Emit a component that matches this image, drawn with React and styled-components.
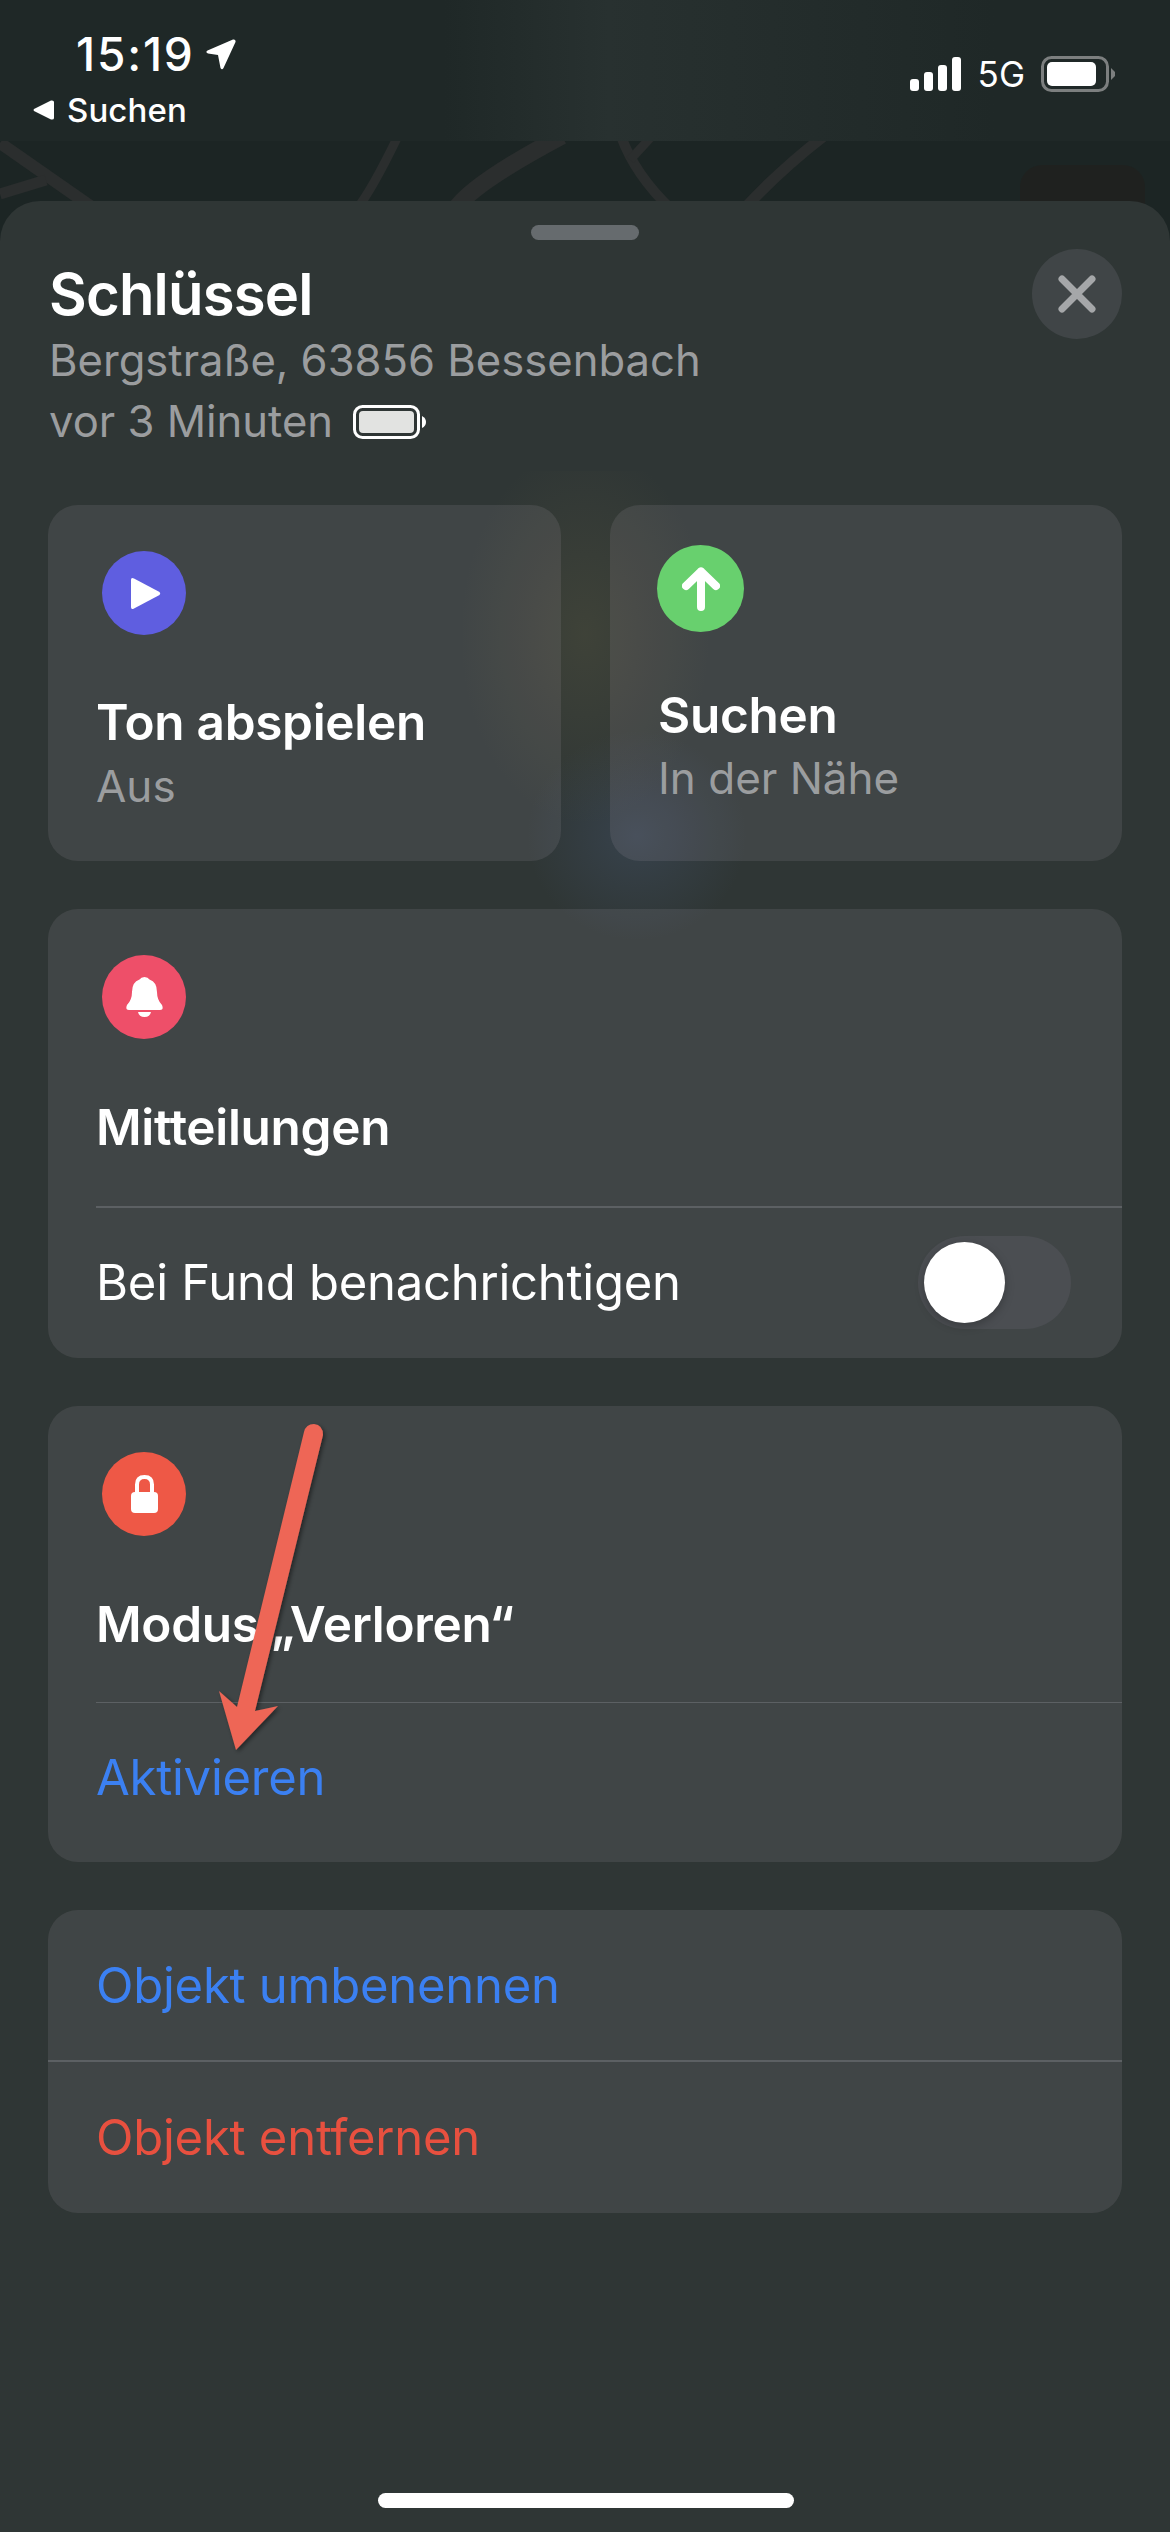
import React from 'react';
import styled, { createGlobalStyle } from 'styled-components';

const Global = createGlobalStyle`
  html, body { margin: 0; padding: 0; background: #1c2524; }
  body { font-family: Inter, "Noto Sans", "Liberation Sans", sans-serif; }
`;

const Screen = styled.div`
  position: relative;
  width: 1170px;
  height: 2532px;
  overflow: hidden;
  background: #1c2524;
  color: #fff;
`;
const MapLayer = styled.svg`
  position: absolute;
  left: 0; top: 0;
`;
const StatusBar = styled.div`
  position: relative;
  height: 141px;
  box-sizing: border-box;
  background: linear-gradient(90deg, #1f2827 0%, #1f2827 38%, #283130 52%, #242d2c 66%, #1f2827 85%, #1f2827 100%);
  display: flex;
  justify-content: space-between;
  padding: 28px 55px 0 33px;
`;
const StatusLeft = styled.div`display: flex; flex-direction: column;`;
const TimeRow = styled.div`
  display: flex; align-items: center; gap: 11px;
  padding-left: 43px;
  font-size: 46px; font-weight: 500; line-height: 52px;
  letter-spacing: 1.8px;
`;
const BackRow = styled.div`
  display: flex; align-items: center; gap: 13px;
  margin-top: 10px;
  font-size: 33px; font-weight: 500; line-height: 40px; letter-spacing: 0.1px;
`;
const StatusRight = styled.div`
  display: flex; align-items: center; gap: 16px; height: 36px; margin-top: 28px;
  font-size: 35px; font-weight: 400;
`;

const Sheet = styled.div`
  position: absolute;
  left: 0; right: 0; top: 201px; bottom: 0;
  background: #2f3635;
  border-radius: 40px 40px 0 0;
  box-sizing: border-box;
  padding: 0 48px;
  display: flex;
  flex-direction: column;
  overflow: hidden;
`;
const Glow = styled.div`
  position: absolute;
  left: 400px; top: 270px;
  width: 370px; height: 480px;
  background:
    radial-gradient(ellipse 125px 190px at 50% 34%, rgba(125,115,70,0.2), transparent 100%),
    radial-gradient(ellipse 110px 105px at 64% 76%, rgba(85,110,160,0.22), transparent 100%);
`;
const Grabber = styled.div`
  width: 108px; height: 15px; border-radius: 8px;
  background: #666b6e;
  align-self: center;
  margin-top: 24px;
  position: relative;
`;
const Header = styled.div`
  position: relative;
  display: flex;
  justify-content: space-between;
  align-items: flex-start;
  margin-top: 9px;
  height: 256px;
`;
const HeaderText = styled.div`
  padding-left: 1px; padding-top: 9px;
`;
const Title = styled.div`
  font-size: 58px; font-weight: 600; line-height: 72px; letter-spacing: -0.8px;
`;
const Sub = styled.div`
  display: flex; align-items: center; gap: 20px;
  font-size: 43.6px; line-height: 61px; color: #9b9d9f; font-weight: 400;
  margin-top: ${p => p.$top || 0}px;
`;
const Close = styled.div`
  width: 90px; height: 90px; border-radius: 50%;
  background: #404547;
  display: flex; align-items: center; justify-content: center;
`;
const Row2 = styled.div`
  position: relative;
  display: grid; grid-template-columns: 513px 512px; gap: 49px;
`;
const Card = styled.div`
  position: relative;
  background: rgba(250, 235, 255, 0.085);
  border-radius: 30px;
  overflow: hidden;
  margin-top: ${p => p.$top || 0}px;
  box-sizing: border-box;
`;
const ActionCard = styled(Card)`
  height: 356px;
  padding: ${p => p.$pad};
`;
const IconCircle = styled.div`
  width: ${p => p.$size || 84}px;
  height: ${p => p.$size || 84}px;
  border-radius: 50%;
  background: ${p => p.$color};
  display: flex; align-items: center; justify-content: center;
`;
const CardTitle = styled.div`
  font-size: 49.5px; font-weight: 600; line-height: 60px; letter-spacing: -0.3px;
  margin-top: ${p => p.$top}px;
  margin-left: ${p => p.$left || 0}px;
`;
const CardSub = styled.div`
  font-size: 44px; line-height: 62px; color: #9b9d9f;
  margin-top: ${p => p.$top || 0}px;
  margin-left: ${p => p.$left || 0}px;
`;
const HeadBlock = styled.div`
  height: ${p => p.$h}px;
  box-sizing: border-box;
  padding: 46px 0 0 54px;
`;
const HeadTitle = styled(CardTitle)`
  margin-left: -6px;
`;
const Divider = styled.div`
  height: 1.5px;
  margin-left: ${p => p.$inset || 0}px;
  background: #5c6063;
`;
const RowLine = styled.div`
  height: ${p => p.$h}px;
  box-sizing: border-box;
  padding: 0 ${p => p.$right || 48}px ${p => p.$bottom || 0}px 48px;
  display: flex; align-items: center; justify-content: space-between;
  font-size: 49px; font-weight: 400; letter-spacing: -0.25px;
  color: ${p => p.$color || '#fff'};
`;
const Toggle = styled.div`
  width: 153px; height: 93px; border-radius: 47px;
  background: #4b4e52;
  padding: 6px;
  box-sizing: border-box;
`;
const Knob = styled.div`
  width: 81px; height: 81px; border-radius: 50%;
  background: #fff;
  box-shadow: 0 3px 10px rgba(0,0,0,.25);
`;
const Arrow = styled.svg`
  position: absolute;
  left: 0; top: 0;
  pointer-events: none;
`;
const HomeBar = styled.div`
  position: absolute;
  left: 378px; bottom: 24px;
  width: 416px; height: 15px; border-radius: 8px;
  background: #fff;
`;

const ROADS = [
  { d: 'M0 143 L96 210', w: 12 },
  { d: 'M0 194 L46 180', w: 11 },
  { d: 'M398 136 Q372 190 356 210', w: 9 },
  { d: 'M562 136 Q470 185 455 210', w: 17 },
  { d: 'M621 136 Q635 175 672 210', w: 10 },
  { d: 'M652 136 L630 160', w: 9 },
  { d: 'M824 136 Q780 170 743 210', w: 11 },
];

export default function App() {
  return (
    <Screen>
      <Global />
      <MapLayer width="1170" height="230" viewBox="0 0 1170 230" fill="none">
        <rect x="1020" y="165" width="125" height="60" rx="22" fill="#221f1d" opacity="0.6" />
        {ROADS.map((r) => (
          <path key={r.d} d={r.d} stroke="#2b2e2e" strokeWidth={r.w} />
        ))}
      </MapLayer>
      <StatusBar>
        <StatusLeft>
          <TimeRow>
            15:19
            <svg width="30" height="31" viewBox="0 0 30 31">
              <path d="M27 0.5 L1.5 11.5 Q-1 13.5 2 14.5 L12 16 L14.5 29 Q16 31.5 17.5 29 L29.5 3 Q30 0 27 0.5 Z" fill="#fff" />
            </svg>
          </TimeRow>
          <BackRow>
            <svg width="21" height="20" viewBox="0 0 21 20">
              <path d="M18 0.5 Q21 0 21 2 V18 Q21 20 18 19.5 L1 11 Q0 10 1 9 Z" fill="#fff" />
            </svg>
            Suchen
          </BackRow>
        </StatusLeft>
        <StatusRight>
          <svg width="52" height="34" viewBox="0 0 52 34" fill="#fff">
            <rect x="0" y="22" width="9" height="12" rx="3" />
            <rect x="14" y="15" width="9" height="19" rx="3" />
            <rect x="28" y="8" width="9" height="26" rx="3" />
            <rect x="42" y="0" width="9" height="34" rx="3" />
          </svg>
          5G
          <svg width="74" height="36" viewBox="0 0 74 36">
            <rect x="1.5" y="1.5" width="65" height="33" rx="9" fill="none" stroke="#7c7f7f" strokeWidth="3" />
            <rect x="6" y="6" width="49" height="24" rx="5" fill="#fff" />
            <path d="M70 12 L74 16 V20 L70 24 Z" fill="#7c7f7f" />
          </svg>
        </StatusRight>
      </StatusBar>
      <Sheet>
        <Glow />
        <Grabber />
        <Header>
          <HeaderText>
            <Title>Schlüssel</Title>
            <Sub>Bergstraße, 63856 Bessenbach</Sub>
            <Sub>
              vor 3 Minuten
              <svg width="74" height="34" viewBox="0 0 74 34">
                <rect x="1.5" y="1.5" width="64" height="31" rx="8" fill="none" stroke="#fff" strokeWidth="3" />
                <rect x="6" y="6" width="55" height="22" rx="4" fill="#e2e3e1" />
                <path d="M69 11 Q73 13 73 17 Q73 21 69 23 Z" fill="#fff" />
              </svg>
            </Sub>
          </HeaderText>
          <Close>
            <svg width="40" height="40" viewBox="0 0 40 40">
              <path d="M5 5 L35 35 M35 5 L5 35" stroke="#a5a7a9" strokeWidth="7" strokeLinecap="round" />
            </svg>
          </Close>
        </Header>
        <Row2>
          <ActionCard $pad="46px 0 0 54px">
            <IconCircle $color="#5f5ee0">
              <svg width="34" height="33" viewBox="0 0 34 33">
                <path d="M7 1.5 L32.5 15 Q34 16.5 32.5 18 L7 31.5 Q4 33 4 30 V3 Q4 0 7 1.5 Z" fill="#fff" />
              </svg>
            </IconCircle>
            <CardTitle $top={57} $left={-6}>Ton abspielen</CardTitle>
            <CardSub $top={3} $left={-6}>Aus</CardSub>
          </ActionCard>
          <ActionCard $pad="40px 0 0 47px">
            <IconCircle $color="#68d06e" $size={87}>
              <svg width="38" height="44" viewBox="0 0 38 44" fill="none">
                <path d="M19 40 V4.5 M4 19 L19 4.5 L34 19" stroke="#fff" strokeWidth="8" strokeLinecap="round" strokeLinejoin="round" />
              </svg>
            </IconCircle>
            <CardTitle $top={53} $left={1}>Suchen</CardTitle>
            <CardSub $top={2} $left={1}>In der Nähe</CardSub>
          </ActionCard>
        </Row2>
        <Card $top={48}>
          <HeadBlock $h={297}>
            <IconCircle $color="#ee4f69">
              <svg width="37" height="40" viewBox="0 0 37 40" fill="#fff">
                <path d="M18.5 0 Q22 0 23.5 2.5 Q31 5 31 15 Q31 23 36 28 Q38 33 34 33 H3 Q-1 33 1 28 Q6 23 6 15 Q6 5 13.5 2.5 Q15 0 18.5 0 Z" />
                <path d="M12 35 H25 Q24 40 18.5 40 Q13 40 12 35 Z" />
              </svg>
            </IconCircle>
            <HeadTitle $top={58}>Mitteilungen</HeadTitle>
          </HeadBlock>
          <Divider $inset={48} />
          <RowLine $h={150} $right={51}>
            Bei Fund benachrichtigen
            <Toggle><Knob /></Toggle>
          </RowLine>
        </Card>
        <Card $top={48}>
          <HeadBlock $h={296}>
            <IconCircle $color="#ee5846">
              <svg width="27" height="38" viewBox="0 0 27 38" fill="#fff">
                <path d="M6 19 V9.5 Q6 2 13.5 2 Q21 2 21 9.5 V19" fill="none" stroke="#fff" strokeWidth="4" />
                <rect x="0" y="17" width="27" height="21" rx="4" />
              </svg>
            </IconCircle>
            <HeadTitle $top={58}>Modus „Verloren“</HeadTitle>
          </HeadBlock>
          <Divider $inset={48} />
          <RowLine $h={159} $bottom={10} $color="#3b80f2">Aktivieren</RowLine>
        </Card>
        <Card $top={48}>
          <RowLine $h={150} $color="#3b80f2">Objekt umbenennen</RowLine>
          <Divider />
          <RowLine $h={151} $color="#e8503f">Objekt entfernen</RowLine>
        </Card>
      </Sheet>
      <Arrow width="1170" height="2532" viewBox="0 0 1170 2532">
        <defs>
          <filter id="arrowShadow" x="-30%" y="-10%" width="160%" height="120%">
            <feDropShadow dx="2" dy="2" stdDeviation="2" floodColor="#000" floodOpacity="0.45" />
          </filter>
        </defs>
        <path
          filter="url(#arrowShadow)"
          fill="#ee6656"
          d="M304 1432 Q306 1424 314 1424 Q323 1425 323 1435 L255 1711 L278 1706 L236 1750 L219 1691 L237 1707 Z"
        />
      </Arrow>
      <HomeBar />
    </Screen>
  );
}
